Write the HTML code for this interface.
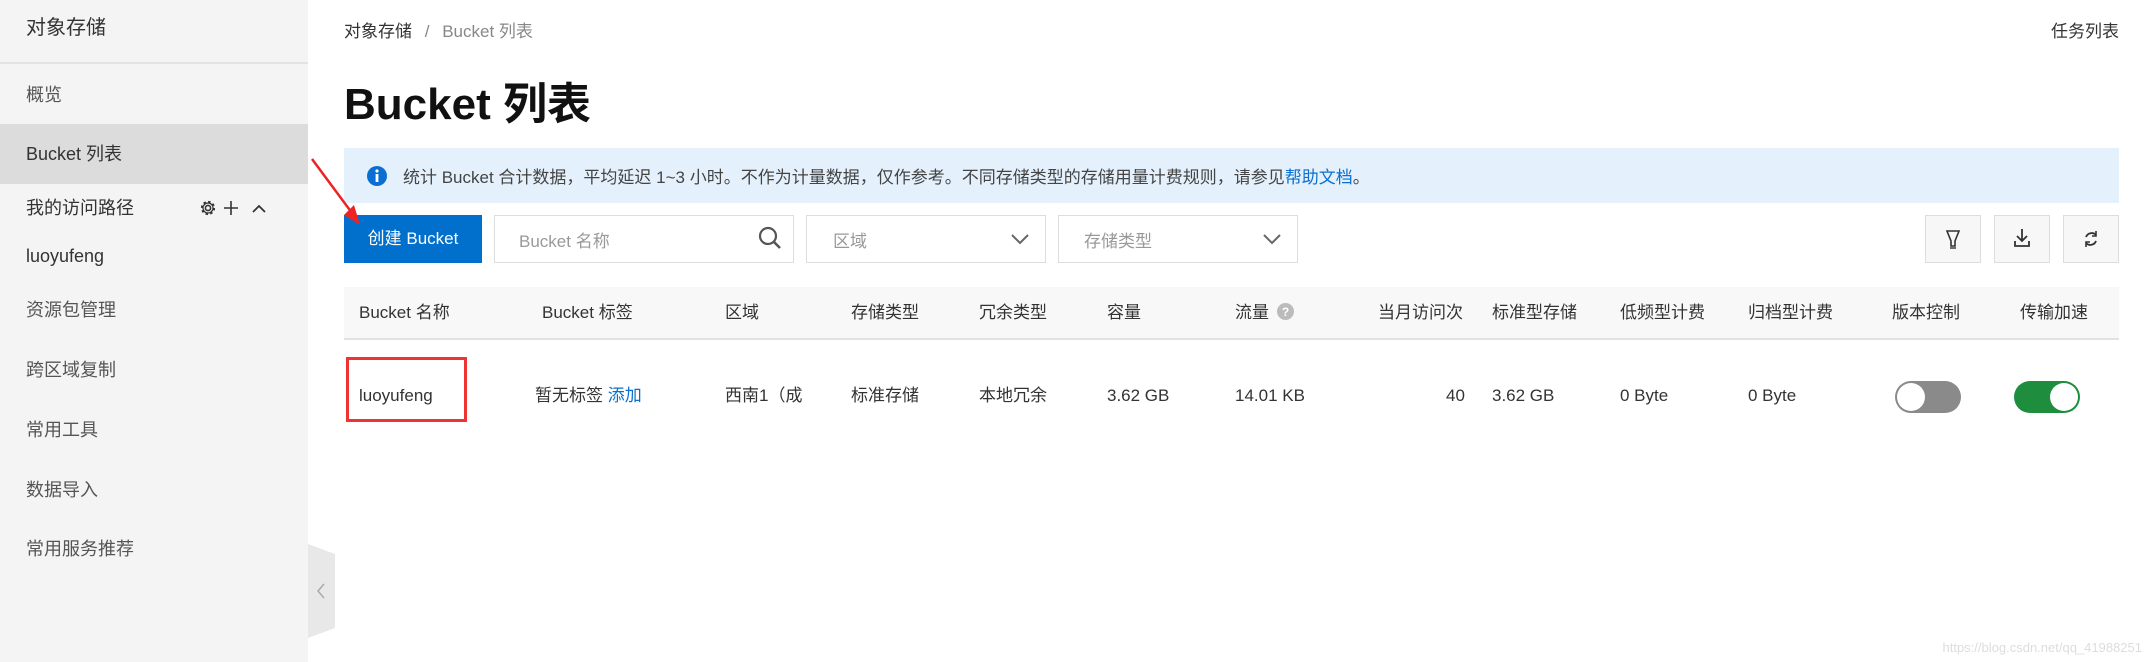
<!DOCTYPE html>
<html><head><meta charset="utf-8"><style>
*{margin:0;padding:0;box-sizing:border-box}
body{width:2156px;height:662px;overflow:hidden;background:#fff;font-family:"Liberation Sans","Noto Sans CJK SC",sans-serif;color:#333;position:relative}
.abs{position:absolute;white-space:nowrap}
.side{position:absolute;left:0;top:0;width:308px;height:662px;background:#f4f4f4}
.si{position:absolute;left:26px;font-size:18px;color:#555;line-height:24px}
.th{position:absolute;top:301px;font-size:17px;color:#333;line-height:24px}
.td{position:absolute;top:384px;font-size:17px;color:#333;line-height:24px}
.box{position:absolute;border:1px solid #ddd;background:#fff}
</style></head><body>
<div class="side">
 <div class="si" style="top:16px;font-size:20px;color:#333">对象存储</div>
 <div style="position:absolute;left:0;top:62px;width:308px;height:2px;background:#e3e3e3"></div>
 <div class="si" style="top:83px">概览</div>
 <div style="position:absolute;left:0;top:124px;width:308px;height:60px;background:#dcdcdc"></div>
 <div class="si" style="top:142px;color:#333">Bucket 列表</div>
 <div class="si" style="top:196px;color:#333">我的访问路径</div>
 <svg class="abs" style="left:199px;top:198px" width="80" height="20" viewBox="0 0 80 20"><circle cx="9" cy="10" r="2.6" fill="none" stroke="#333" stroke-width="1.6"/><circle cx="9" cy="10" r="6" fill="none" stroke="#333" stroke-width="2.2" stroke-dasharray="2.4 2.3"/><circle cx="9" cy="10" r="5" fill="none" stroke="#333" stroke-width="1.2"/><path d="M32 3v14M25 10h14" stroke="#333" stroke-width="1.6"/><path d="M54 14l6-6 6 6" fill="none" stroke="#333" stroke-width="1.8"/></svg>
 <div class="si" style="top:244px;color:#333">luoyufeng</div>
 <div class="si" style="top:298px">资源包管理</div>
 <div class="si" style="top:358px">跨区域复制</div>
 <div class="si" style="top:418px">常用工具</div>
 <div class="si" style="top:478px">数据导入</div>
 <div class="si" style="top:537px">常用服务推荐</div>
</div>
<svg class="abs" style="left:308px;top:544px" width="28" height="94" viewBox="0 0 28 94"><path d="M0 0L27 10V84L0 94Z" fill="#e8e8e8"/><path d="M16 40l-6 7 6 7" fill="none" stroke="#aaa" stroke-width="1.5"/></svg>
<div class="abs" style="left:344px;top:17px;font-size:17px;color:#333">对象存储 <span style="color:#888;margin:0 8px">/</span> <span style="color:#888">Bucket 列表</span></div>
<div class="abs" style="right:37px;top:17px;font-size:17px;color:#333">任务列表</div>
<div class="abs" style="left:344px;top:68px;font-size:44px;font-weight:bold;color:#111">Bucket 列表</div>
<div style="position:absolute;left:344px;top:148px;width:1775px;height:55px;background:#e4f1fc"></div>
<svg class="abs" style="left:367px;top:166px" width="20" height="20"><circle cx="10" cy="10" r="10" fill="#0a6fd0"/><rect x="8.6" y="8" width="2.8" height="8" fill="#fff"/><circle cx="10" cy="5" r="1.6" fill="#fff"/></svg>
<div class="abs" style="left:403px;top:163px;font-size:17px;color:#444">统计 Bucket 合计数据，平均延迟 1~3 小时。不作为计量数据，仅作参考。不同存储类型的存储用量计费规则，请参见<span style="color:#0a6fd0">帮助文档</span>。</div>
<div style="position:absolute;left:344px;top:215px;width:138px;height:48px;background:#0070cc;color:#fff;font-size:17px;line-height:48px;text-align:center">创建 Bucket</div>
<div class="box" style="left:494px;top:215px;width:300px;height:48px"></div>
<div class="abs" style="left:519px;top:227px;font-size:17px;color:#999">Bucket 名称</div>
<svg class="abs" style="left:757px;top:225px" width="26" height="26"><circle cx="11" cy="11" r="8" fill="none" stroke="#555" stroke-width="2.2"/><path d="M17 17l6 6" stroke="#555" stroke-width="2.6"/></svg>
<div class="box" style="left:806px;top:215px;width:240px;height:48px"></div>
<div class="abs" style="left:833px;top:227px;font-size:17px;color:#999">区域</div>
<svg class="abs" style="left:1010px;top:232px" width="20" height="14"><path d="M2 3l8 8 8-8" fill="none" stroke="#666" stroke-width="2"/></svg>
<div class="box" style="left:1058px;top:215px;width:240px;height:48px"></div>
<div class="abs" style="left:1084px;top:227px;font-size:17px;color:#999">存储类型</div>
<svg class="abs" style="left:1262px;top:232px" width="20" height="14"><path d="M2 3l8 8 8-8" fill="none" stroke="#666" stroke-width="2"/></svg>
<div class="box" style="left:1925px;top:215px;width:56px;height:48px;background:#f7f7f7"></div>
<svg class="abs" style="left:1943px;top:228px" width="20" height="22"><path d="M4 3h12l-4 10v5h-4v-5z" fill="none" stroke="#333" stroke-width="1.6"/><path d="M7 20h6" stroke="#333" stroke-width="1.4"/></svg>
<div class="box" style="left:1994px;top:215px;width:56px;height:48px;background:#f7f7f7"></div>
<svg class="abs" style="left:2012px;top:227px" width="20" height="22"><path d="M10 2v12M5 9l5 5 5-5" fill="none" stroke="#333" stroke-width="1.8"/><path d="M3 14v5h14v-5" fill="none" stroke="#333" stroke-width="1.8"/></svg>
<div class="box" style="left:2063px;top:215px;width:56px;height:48px;background:#f7f7f7"></div>
<svg class="abs" style="left:2081px;top:229px" width="20" height="20"><path d="M15 6a6 6 0 0 0-10 2M5 14a6 6 0 0 0 10-2" fill="none" stroke="#333" stroke-width="1.8"/><path d="M15 2v5h-4M5 18v-5h4" fill="none" stroke="#333" stroke-width="1.6"/></svg>
<div style="position:absolute;left:344px;top:287px;width:1775px;height:53px;background:#f8f8f8;border-bottom:2px solid #e2e2e2"></div>
<div class="th" style="left:359px">Bucket 名称</div>
<div class="th" style="left:542px">Bucket 标签</div>
<div class="th" style="left:725px">区域</div>
<div class="th" style="left:851px">存储类型</div>
<div class="th" style="left:979px">冗余类型</div>
<div class="th" style="left:1107px">容量</div>
<div class="th" style="left:1235px">流量 <svg width="17" height="17" style="vertical-align:-2px;margin-left:3px"><circle cx="8.5" cy="8.5" r="8.5" fill="#bbb"/><text x="8.5" y="13" font-size="12" fill="#fff" text-anchor="middle" font-family="Liberation Sans" font-weight="bold">?</text></svg></div>
<div class="th" style="left:1378px">当月访问次</div>
<div class="th" style="left:1492px">标准型存储</div>
<div class="th" style="left:1620px">低频型计费</div>
<div class="th" style="left:1748px">归档型计费</div>
<div class="th" style="left:1892px">版本控制</div>
<div class="th" style="left:2020px">传输加速</div>
<div style="position:absolute;left:346px;top:357px;width:121px;height:65px;border:3px solid #ee3333"></div>
<div class="td" style="left:359px">luoyufeng</div>
<div class="td" style="left:535px">暂无标签 <span style="color:#0a6fd0">添加</span></div>
<div class="td" style="left:725px">西南1（成</div>
<div class="td" style="left:851px">标准存储</div>
<div class="td" style="left:979px">本地冗余</div>
<div class="td" style="left:1107px">3.62 GB</div>
<div class="td" style="left:1235px">14.01 KB</div>
<div class="td" style="left:1446px">40</div>
<div class="td" style="left:1492px">3.62 GB</div>
<div class="td" style="left:1620px">0 Byte</div>
<div class="td" style="left:1748px">0 Byte</div>
<div style="position:absolute;left:1895px;top:381px;width:66px;height:32px;border-radius:16px;background:#8a8a8a"></div>
<div style="position:absolute;left:1897px;top:383px;width:28px;height:28px;border-radius:50%;background:#fff"></div>
<div style="position:absolute;left:2014px;top:381px;width:66px;height:32px;border-radius:16px;background:#1e8e3e"></div>
<div style="position:absolute;left:2050px;top:383px;width:28px;height:28px;border-radius:50%;background:#fff"></div>
<svg class="abs" style="left:308px;top:155px" width="60" height="75"><path d="M4 4L44 58" stroke="#ee2222" stroke-width="2.5"/><path d="M36 60L52 70 46 50Z" fill="#ee2222"/></svg>
<div class="abs" style="right:14px;top:640px;font-size:13px;color:#ddd">https://blog.csdn.net/qq_41988251</div>
</body></html>
